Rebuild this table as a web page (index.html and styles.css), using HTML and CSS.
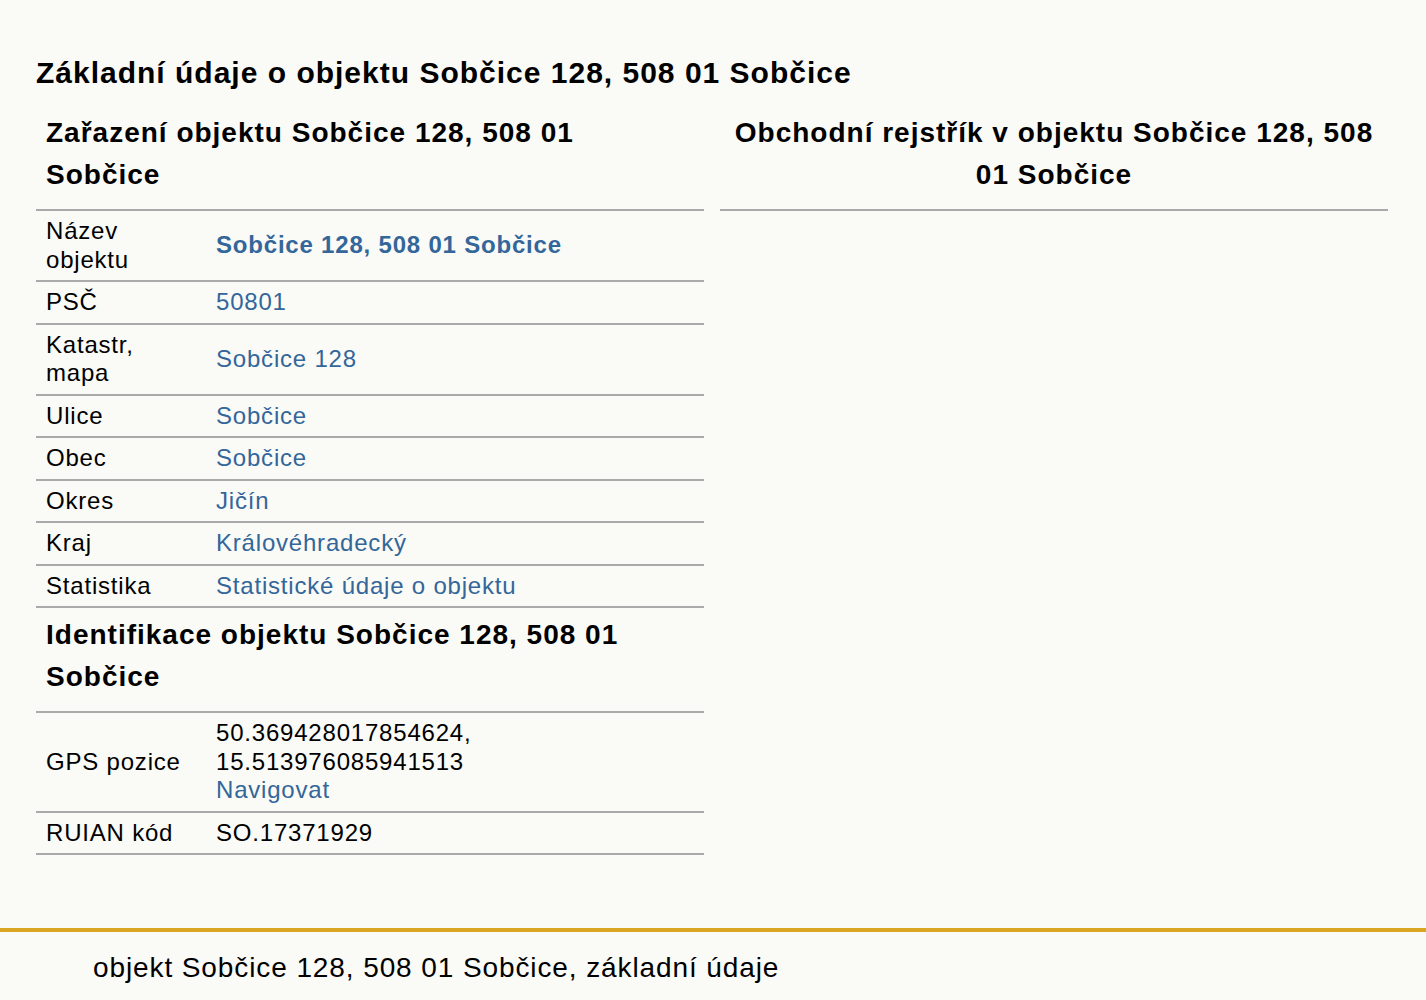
FILE: index.html
```html
<!DOCTYPE html>
<html lang="cs">
<head>
    <meta charset="UTF-8">
    <meta name="viewport" content="width=device-width, initial-scale=1.0">
    <title>Sobčice 128, 508 01 Sobčice</title>
    <link rel="stylesheet" href="styles.css">
</head>
<body>

<div class="page">
    <h1 class="page-title">Základní údaje o objektu Sobčice 128, 508 01 Sobčice</h1>

    <div class="columns">
        <div class="column">
            <h2 class="section-title">Zařazení objektu Sobčice 128, 508 01 Sobčice</h2>
            <table class="info">
                <tr>
                    <td class="label">Název objektu</td>
                    <td class="value"><a href="#" class="strong">Sobčice 128, 508 01 Sobčice</a></td>
                </tr>
                <tr>
                    <td class="label">PSČ</td>
                    <td class="value"><a href="#">50801</a></td>
                </tr>
                <tr>
                    <td class="label">Katastr, mapa</td>
                    <td class="value"><a href="#">Sobčice 128</a></td>
                </tr>
                <tr>
                    <td class="label">Ulice</td>
                    <td class="value"><a href="#">Sobčice</a></td>
                </tr>
                <tr>
                    <td class="label">Obec</td>
                    <td class="value"><a href="#">Sobčice</a></td>
                </tr>
                <tr>
                    <td class="label">Okres</td>
                    <td class="value"><a href="#">Jičín</a></td>
                </tr>
                <tr>
                    <td class="label">Kraj</td>
                    <td class="value"><a href="#">Královéhradecký</a></td>
                </tr>
                <tr>
                    <td class="label">Statistika</td>
                    <td class="value"><a href="#">Statistické údaje o objektu</a></td>
                </tr>
            </table>

            <h2 class="section-title">Identifikace objektu Sobčice 128, 508 01 Sobčice</h2>
            <table class="info">
                <tr>
                    <td class="label">GPS pozice</td>
                    <td class="value">50.369428017854624,<br>15.513976085941513<br><a href="#">Navigovat</a></td>
                </tr>
                <tr>
                    <td class="label">RUIAN kód</td>
                    <td class="value">SO.17371929</td>
                </tr>
            </table>
        </div>

        <div class="column">
            <h2 class="section-title centered">Obchodní rejstřík v objektu Sobčice 128, 508 01 Sobčice</h2>
        </div>
    </div>
</div>

<div class="footer">
    objekt Sobčice 128, 508 01 Sobčice, základní údaje
</div>

</body>
</html>
```

FILE: styles.css
```css
body {
    font-family: 'Liberation Sans', Arial, Helvetica, sans-serif;
    background-color: #fafaf7;
    color: #000;
    margin: 0;
}

a {
    color: #336699;
    text-decoration: none;
}

a.strong {
    font-weight: bold;
}

.page {
    padding: 52px 38px 0 36px;
}

.page-title {
    font-size: 30px;
    line-height: 42px;
    letter-spacing: 1px;
    margin: 0 0 12px 0;
}

.columns {
    display: grid;
    grid-template-columns: 1fr 1fr;
    gap: 16px;
}

.section-title {
    font-size: 28px;
    line-height: 42px;
    letter-spacing: 1px;
    margin: 0;
    padding: 6px 10px 13px 10px;
    border-bottom: 2px solid #aaaaaa;
}

.section-title.centered {
    text-align: center;
}

.info {
    width: 100%;
    border-collapse: collapse;
    font-size: 24px;
    line-height: 28.5px;
    letter-spacing: 0.8px;
}

.info td {
    padding: 6px 10px;
    border-bottom: 2px solid #aaaaaa;
    vertical-align: middle;
}

.info td.label {
    width: 150px;
}

.footer {
    margin-top: 73px;
    border-top: 4px solid #daa520;
    padding: 18px 0 18px 93px;
    font-size: 28px;
    line-height: 36px;
    letter-spacing: 0.9px;
}
```
